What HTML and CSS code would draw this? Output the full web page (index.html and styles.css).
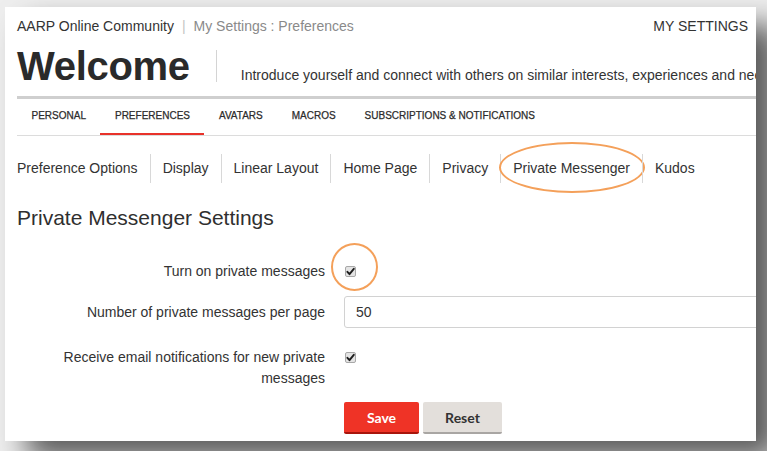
FILE: index.html
```html
<!DOCTYPE html>
<html lang="en">
<head>
<meta charset="utf-8">
<title>My Settings : Preferences</title>
<link rel="stylesheet" href="styles.css">
</head>
<body>
<div class="page">
  <div class="panel">
    <header class="topbar">
      <div class="crumbs">
        <a class="site" href="#">AARP Online Community</a>
        <span class="crumb-sep">|</span>
        <span class="crumb">My Settings : Preferences</span>
      </div>
      <a class="my-settings" href="#">MY SETTINGS</a>
    </header>

    <div class="hero">
      <h1 class="hero-title">Welcome</h1>
      <p class="hero-intro">Introduce yourself and connect with others on similar interests, experiences and needs.</p>
    </div>

    <nav class="tabs">
      <a class="tab" href="#">PERSONAL</a>
      <a class="tab tab-active" href="#">PREFERENCES</a>
      <a class="tab" href="#">AVATARS</a>
      <a class="tab" href="#">MACROS</a>
      <a class="tab" href="#">SUBSCRIPTIONS &amp; NOTIFICATIONS</a>
    </nav>

    <nav class="subnav">
      <a class="subnav-item" href="#">Preference Options</a>
      <a class="subnav-item" href="#">Display</a>
      <a class="subnav-item" href="#">Linear Layout</a>
      <a class="subnav-item" href="#">Home Page</a>
      <a class="subnav-item" href="#">Privacy</a>
      <a class="subnav-item subnav-current" href="#">Private Messenger<span class="ring ring-oval"></span></a>
      <a class="subnav-item" href="#">Kudos</a>
    </nav>

    <h2 class="section-title">Private Messenger Settings</h2>

    <form class="settings">
      <div class="row row-toggle">
        <label class="row-label">Turn on private messages</label>
        <div class="row-field">
          <span class="check">
            <svg viewBox="0 0 11 11" width="11" height="11"><path d="M2.4 5.8 L4.5 8.2 L8.8 2.8" fill="none" stroke="#1e1e1e" stroke-width="1.9" stroke-linecap="round" stroke-linejoin="round"/></svg>
            <span class="ring ring-circle"></span>
          </span>
        </div>
      </div>

      <div class="row row-count">
        <label class="row-label">Number of private messages per page</label>
        <div class="row-field">
          <input class="text-input" type="text" value="50">
        </div>
      </div>

      <div class="row row-email">
        <label class="row-label">Receive email notifications for new private messages</label>
        <div class="row-field">
          <span class="check check-top">
            <svg viewBox="0 0 11 11" width="11" height="11"><path d="M2.4 5.8 L4.5 8.2 L8.8 2.8" fill="none" stroke="#1e1e1e" stroke-width="1.9" stroke-linecap="round" stroke-linejoin="round"/></svg>
          </span>
        </div>
      </div>

      <div class="row row-actions">
        <span></span>
        <div class="buttons">
          <button class="btn btn-save" type="button">Save</button>
          <button class="btn btn-reset" type="button">Reset</button>
        </div>
      </div>
    </form>
  </div>
</div>
</body>
</html>
```

FILE: styles.css
```css
html, body {
  margin: 0;
  padding: 0;
}

body {
  background: #eeeeee;
  font-family: "Liberation Sans", Arial, sans-serif;
  color: #333;
  width: 767px;
  height: 451px;
  overflow: hidden;
}

a {
  color: inherit;
  text-decoration: none;
}

.page {
  padding: 7px 0 0 5px;
}

/* white sheet with its soft drop shadow */
.panel {
  width: 751px;
  height: 434px;
  background: #fff;
  overflow: hidden;
  padding-left: 12px;
  box-sizing: border-box;
  box-shadow: 22px 18px 28px rgba(0, 0, 0, 0.62);
}

/* breadcrumb bar */
.topbar {
  display: flex;
  justify-content: space-between;
  align-items: center;
  padding-top: 10px;
  height: 18px;
  line-height: 18px;
  font-size: 14px;
}

.crumbs {
  display: flex;
  gap: 8px;
}

.site {
  color: #333;
}

.crumb-sep {
  color: #c4c4c4;
}

.crumb {
  color: #8a8a8a;
}

.my-settings {
  color: #333;
  padding-right: 8px;
}

/* title row */
.hero {
  display: flex;
  align-items: flex-start;
  margin-top: 8px;
  height: 53px;
  white-space: nowrap;
}

.hero-title {
  margin: 0;
  font-size: 40px;
  line-height: 46px;
  font-weight: 700;
  color: #2a2a2a;
  letter-spacing: -0.3px;
}

.hero-intro {
  margin: 7px 0 0 26px;
  height: 32px;
  box-sizing: border-box;
  padding: 18px 0 0 24px;
  border-left: 1px solid #d4d4d4;
  font-size: 14px;
  line-height: 14px;
  color: #333;
}

/* primary tabs */
.tabs {
  display: flex;
  border-top: 3px solid #cfcfcf;
  border-bottom: 1px solid #dcdcdc;
  height: 36px;
  width: 760px;
}

.tab {
  display: block;
  padding: 0 14.5px;
  line-height: 34px;
  height: 34px;
  font-size: 10px;
  color: #2c2c2c;
  -webkit-text-stroke: 0.25px #2c2c2c;
  white-space: nowrap;
  border-bottom: 2px solid transparent;
}

.tab-active {
  border-bottom-color: #e8322a;
}

/* secondary links */
.subnav {
  display: flex;
  margin-top: 18px;
  height: 29px;
}

.subnav-item {
  position: relative;
  display: block;
  padding: 0 12px;
  line-height: 29px;
  font-size: 14px;
  color: #333;
  border-left: 1px solid #d8d8d8;
  white-space: nowrap;
}

.subnav-item:first-child {
  padding-left: 0;
  border-left: 0;
}

/* orange highlight marks */
.ring {
  position: absolute;
  border: 2px solid #f4a05a;
  border-radius: 50%;
  pointer-events: none;
}

.ring-oval {
  left: -2px;
  top: -12px;
  width: 142px;
  height: 47px;
}

.ring-circle {
  left: -15px;
  top: -24px;
  width: 43px;
  height: 44px;
}

.section-title {
  margin: 23px 0 0;
  font-size: 21px;
  line-height: 24px;
  font-weight: 400;
  color: #2f2f2f;
}

/* form rows */
.settings {
  margin: 0;
}

.row {
  display: grid;
  grid-template-columns: 308px 1fr;
  column-gap: 19px;
  align-items: center;
}

.row-label {
  text-align: right;
  font-size: 14px;
  line-height: 20px;
  color: #333;
}

.row-toggle {
  margin-top: 31px;
}

.row-count {
  margin-top: 15px;
}

.row-email {
  margin-top: 19px;
  align-items: start;
}

.row-email .row-label {
  line-height: 21px;
}

.row-actions {
  margin-top: 13px;
}

.row-field {
  display: flex;
  align-items: center;
}

.check {
  position: relative;
  display: block;
  width: 11px;
  height: 11px;
  box-sizing: border-box;
  border: 1px solid #a8a8a8;
  border-radius: 2px;
  background: #e4e4e4;
  margin-left: 1px;
}

.check svg {
  position: absolute;
  left: -1px;
  top: -1px;
}

.check-top {
  margin-top: 5px;
}

.text-input {
  width: 520px;
  height: 32px;
  box-sizing: border-box;
  border: 1px solid #d2d2d2;
  border-radius: 3px;
  padding: 0 11px;
  font-family: "Liberation Sans", Arial, sans-serif;
  font-size: 14px;
  color: #333;
  background: #fff;
}

.buttons {
  display: flex;
  gap: 4px;
}

.btn {
  height: 32px;
  border: 0;
  border-radius: 2px;
  font-family: Lato, "Liberation Sans", sans-serif;
  font-weight: 700;
  font-size: 14px;
  cursor: pointer;
}

.btn-save {
  width: 75px;
  background: #ef3326;
  color: #fff;
  border-bottom: 2px solid #a8150c;
}

.btn-reset {
  width: 79px;
  background: #e3dfdb;
  color: #333;
  border-bottom: 2px solid #a9a6a3;
}
```
